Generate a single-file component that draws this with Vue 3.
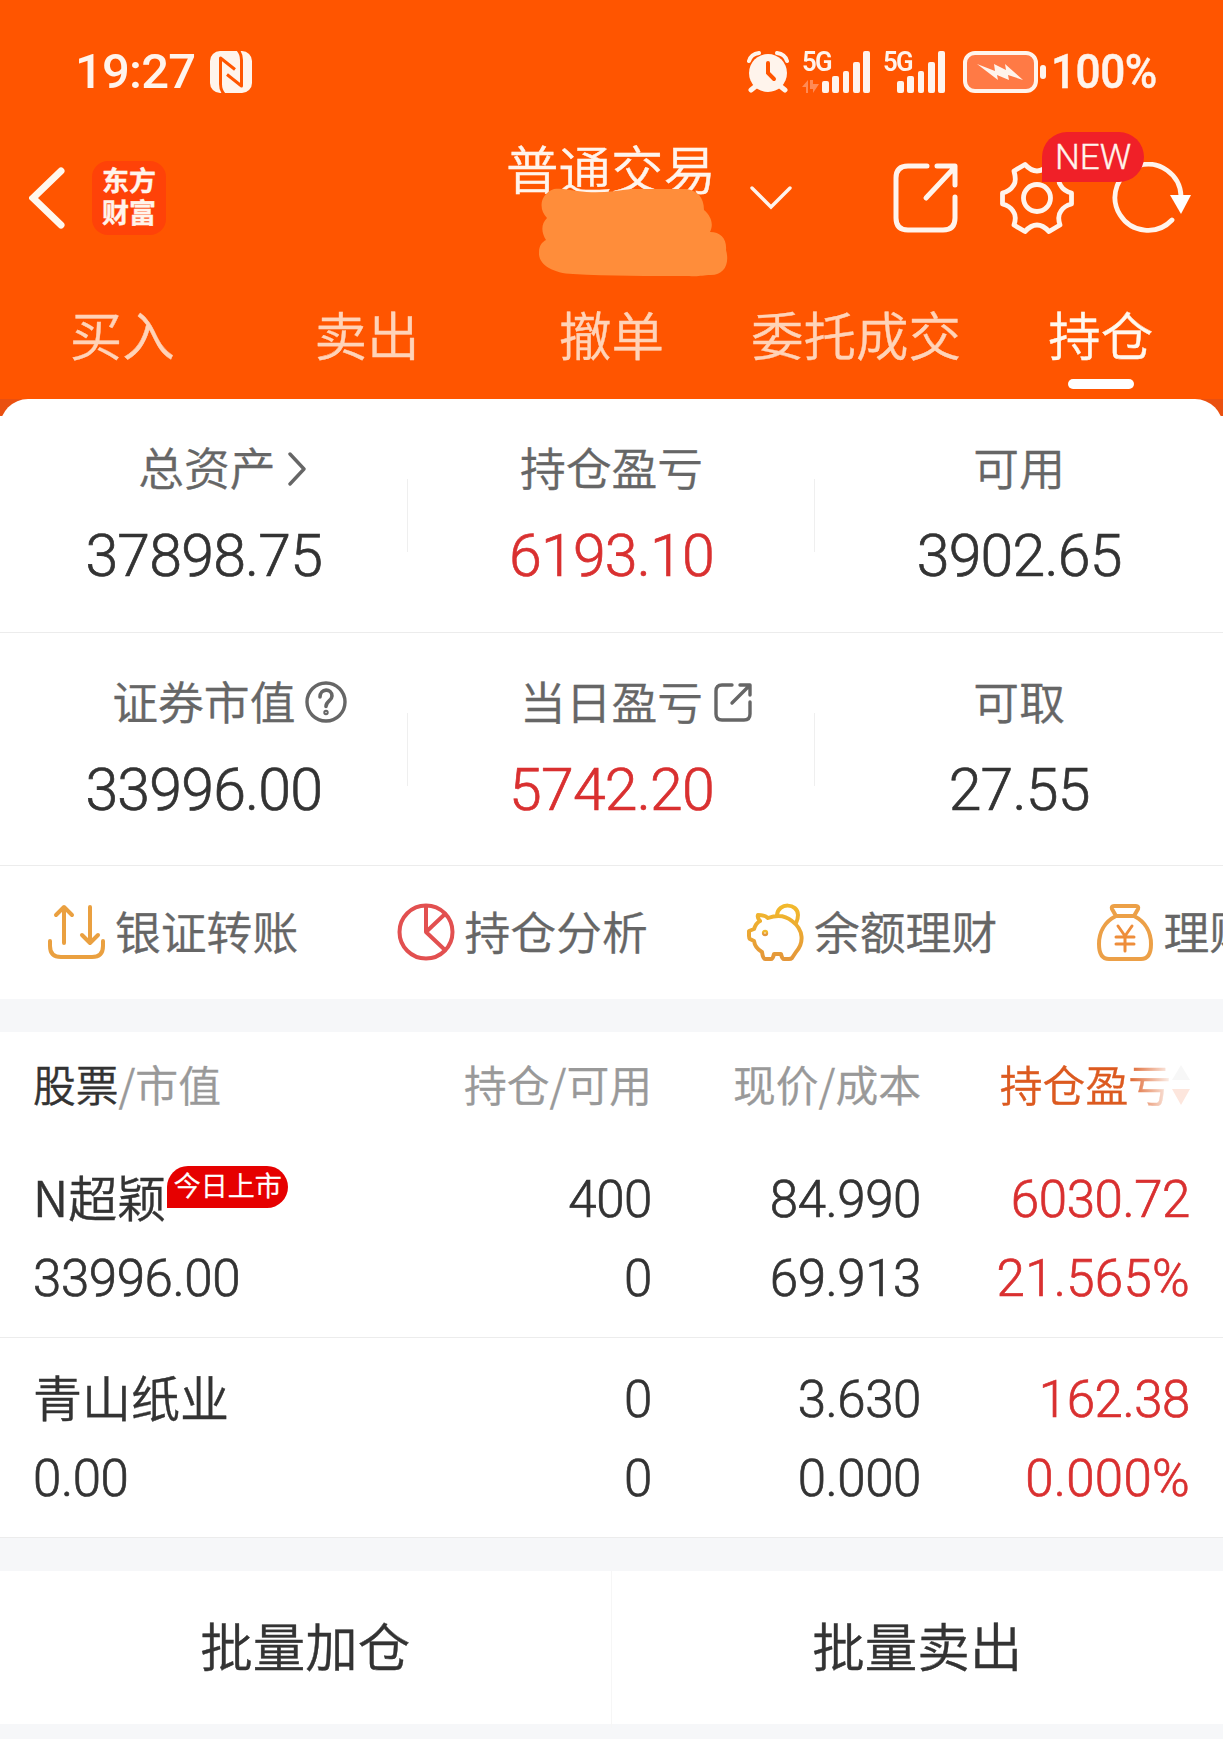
<template>
  <div class="trade-page">
    <header class="header">
      <div class="status-bar">
        <span class="status-time">19:27</span>
        <svg class="nfc" viewBox="0 0 42 42">
          <rect width="42" height="42" rx="10" fill="#fff4ec" />
          <path d="M14 43Q10.500 39 10.500 33V7L25 18.500M28 -1Q31.500 3 31.500 9V35L17 23.500" fill="none" stroke="#ff5500" stroke-width="3" stroke-linejoin="round" />
        </svg>

        <div class="status-right">
          <svg class="alarm" viewBox="0 0 42 42">
            <g fill="none" stroke="#fff4ec" stroke-linecap="round">
              <path d="M2 10Q4 3 12 2M30 2Q38 3 40 10" stroke-width="4" />
              <path d="M9 35L4 39M33 35L38 39" stroke-width="5" />
            </g>
            <circle cx="21" cy="22" r="19" fill="#fff4ec" />
            <path d="M21 12V22L27 28" fill="none" stroke="#ff5500" stroke-width="4" stroke-linecap="round" />
          </svg>

          <div v-for="n in 2" :key="n" class="signal" :class="'signal-' + n">
            <span class="signal-label">5G</span>
            <svg v-if="n === 1" class="signal-data" viewBox="0 0 18 13">
              <path d="M0 7L6 0V13H4V7ZM8 0H11V4H17L11 13V9H8Z" fill="#ff8a55" />
            </svg>
            <div class="signal-bars">
              <i v-for="h in bars" :key="h" :style="{ height: h + 'px' }"></i>
            </div>
          </div>

          <svg class="battery" viewBox="0 0 84 42">
            <rect x="2" y="2" width="71" height="38" rx="10" fill="#ff7a45" stroke="#fff4ec" stroke-width="4" />
            <path d="M14 13L32 20L31 13L43 19L42 13L60 29L45 24L46 29L34 24L35 29Z" fill="#fff4ec" />
            <rect x="77" y="14" width="6" height="14" rx="3" fill="#fff4ec" />
          </svg>
          <span class="status-percent">100%</span>
        </div>
      </div>

      <div class="nav-bar">
        <svg class="back" viewBox="0 0 36 62">
          <path d="M32 4L4 31L32 58" fill="none" stroke="#fff8ee" stroke-width="7" stroke-linecap="round" />
        </svg>
        <div class="logo">
          <span>东方</span>
          <span>财富</span>
        </div>

        <div class="account">
          <span class="account-title">普通交易</span>
          <svg class="account-mask" viewBox="0 0 190 90">
            <path d="M15 1C24 0 29 2 38 3C60 6 75 3 93 1H147C158 2 165 9 165 22C172 28 175 36 171 44C182 44 188 51 187 62C191 76 185 87 172 87C163 87 160 89 150 88C110 88 70 88 34 86C13 85 -1 76 0 64C0 58 3 54 7 52C2 44 2 36 8 30C-1 21 1 6 15 1Z" fill="#ff8d3a" />
          </svg>
        </div>
        <svg class="account-arrow" viewBox="0 0 42 24">
          <path d="M2 2L21 21L40 2" fill="none" stroke="#fff4ec" stroke-width="3.4" stroke-linecap="round" />
        </svg>

        <div class="actions">
          <svg class="action-share" viewBox="0 0 66 70">
            <path d="M34 3H15Q3 3 3 15V55Q3 67 15 67H50Q62 67 62 55V34M33 35L62 4M44 3H62V22" fill="none" stroke="#fff4ec" stroke-width="5" stroke-linecap="round" stroke-linejoin="round" />
          </svg>
          <svg class="action-gear" viewBox="0 0 74 72">
            <path d="M25 2.500L14 9Q17 20 13 24Q10 29 2.500 31V42Q10 44 13 49Q17 54 14 63L25 69.500Q31 63 37 63Q43 63 49 69.500L60 63Q57 54 61 49Q64 44 71.500 42V31Q64 29 61 24Q57 19 60 9L49 2.500Q43 9 37 9Q31 9 25 2.500Z" fill="none" stroke="#fff4ec" stroke-width="4.800" stroke-linejoin="round" />
            <circle cx="37" cy="36" r="13.500" fill="none" stroke="#fff4ec" stroke-width="4.800" />
          </svg>
          <svg class="action-refresh" viewBox="0 0 80 72">
            <path d="M60 58A33 33 0 1 1 69 34" fill="none" stroke="#fff4ec" stroke-width="4.800" stroke-linecap="round" />
            <path d="M58 33H79L69 52Z" fill="#fff" />
          </svg>
          <span class="new-badge">NEW</span>
        </div>
      </div>

      <nav class="tabs">
        <span
          v-for="tab in tabs"
          :key="tab"
          class="tab"
          :class="{ active: tab === activeTab }"
          @click="activeTab = tab"
        >{{ tab }}</span>
      </nav>
    </header>

    <div class="card-wrap">
      <section class="summary">
        <div v-for="(row, i) in summary" :key="i" class="summary-row">
          <div v-for="item in row" :key="item.label" class="summary-cell">
            <div class="summary-label" :class="item.icon">
              <span>{{ item.label }}</span>
              <span class="label-icon">
                <svg v-if="item.icon === 'arrow'" width="18" height="36" viewBox="0 0 18 36">
                  <path d="M2 3L16 18L2 33" />
                </svg>
                <svg v-if="item.icon === 'help'" width="42" height="42" viewBox="0 0 42 42">
                  <circle cx="21" cy="21" r="19" />
                  <path d="M15 16C15 7 27 7 27 15C27 20 21 20 21 25.500" stroke-width="3.600" />
                  <circle cx="21" cy="31.500" r="1" />
                </svg>
                <svg v-if="item.icon === 'share'" width="40" height="40" viewBox="0 0 40 40">
                  <path d="M19 3H9Q3 3 3 9V32Q3 38 9 38H31Q37 38 37 32V20M19 21L36 4M27 3H37V13" />
                </svg>
              </span>
            </div>
            <div class="summary-value" :class="{ red: item.red }">{{ item.value }}</div>
          </div>
        </div>
      </section>
    </div>

    <section class="tools">
      <div class="tool">
        <svg viewBox="0 0 58 58" stroke="#eaa040">
          <path d="M17 40V5M9 12L17 4L25 12M43 4V39M35 32L43 40L51 32M3 38V43Q3 54 14 54H45Q56 54 56 43V38" />
        </svg>
        <span>银证转账</span>
      </div>
      <div class="tool">
        <svg viewBox="0 0 58 58" stroke="#e25050">
          <circle cx="29" cy="29" r="26.500" />
          <path d="M29 3V29L48 11M29 29L48 47" />
        </svg>
        <span>持仓分析</span>
      </div>
      <div class="tool">
        <svg viewBox="0 0 58 58" stroke="url(#gold)">
          <defs>
            <linearGradient id="gold" x1="0" y1="0" x2="0" y2="1">
              <stop offset="0" stop-color="#f2b92c" />
              <stop offset="1" stop-color="#e4973a" />
            </linearGradient>
          </defs>
          <path d="M12 12Q19 12 22 15C30 12 39 12 46 18C58 27 58 40 50 49L46 55Q45 56 43 56H38Q36 56 35 51H28Q27 56 25 56H19Q17 56 16 49Q9 45 8 38L4 36Q3 35 3 33V28L8 26Q10 20 14 18Q11 15 12 12ZM31 12C32 -1 52 0 52 12Q52 16 50 20" />
          <circle cx="19" cy="30" r="1.200" />
        </svg>
        <span>余额理财</span>
      </div>
      <div class="tool">
        <svg viewBox="0 0 58 58" stroke="#eca047">
          <path d="M18 3H40Q43 3 42 6L38 13H20L16 6Q15 3 18 3ZM20 13C8 19 3 30 3 41C3 51 6 56 13 56H45C52 56 55 51 55 41C55 30 50 19 38 13" />
          <path d="M22 23L29 33L36 23M29 33V48M20 34H38M20 41H38" stroke="#ee8d3a" stroke-width="3" />
        </svg>
        <span>理财</span>
      </div>
    </section>

    <section class="positions">
      <div class="grid table-head">
        <span><b>股票</b>/市值</span>
        <span>持仓/可用</span>
        <span>现价/成本</span>
        <span class="sort-col">
          <span class="sort-text">持仓盈亏</span>
          <svg class="sort-icon" viewBox="0 0 18 40">
            <path d="M0 15L9 0L18 15Z" fill="#f7f7f7" />
            <path d="M0 24H18L9 40Z" fill="#fde6dd" />
          </svg>
        </span>
      </div>

      <div v-for="stock in stocks" :key="stock.name" class="grid stock-row">
        <div class="stock-name">
          <span>{{ stock.name }}</span>
          <span v-if="stock.tag" class="stock-tag">{{ stock.tag }}</span>
        </div>
        <span>{{ stock.holding }}</span>
        <span>{{ stock.price }}</span>
        <span class="red">{{ stock.profit }}</span>
        <span>{{ stock.market }}</span>
        <span>{{ stock.available }}</span>
        <span>{{ stock.cost }}</span>
        <span class="red rate">{{ stock.rate }}</span>
      </div>
    </section>

    <footer class="batch-bar">
      <div class="batch-btn">批量加仓</div>
      <div class="batch-btn">批量卖出</div>
    </footer>
  </div>
</template>

<script setup>
import { ref } from 'vue'

const bars = [12, 17, 22, 31, 42]

const tabs = ['买入', '卖出', '撤单', '委托成交', '持仓']
const activeTab = ref('持仓')

const summary = [
  [
    { label: '总资产', value: '37898.75', icon: 'arrow' },
    { label: '持仓盈亏', value: '6193.10', red: true },
    { label: '可用', value: '3902.65' }
  ],
  [
    { label: '证券市值', value: '33996.00', icon: 'help' },
    { label: '当日盈亏', value: '5742.20', icon: 'share', red: true },
    { label: '可取', value: '27.55' }
  ]
]

const stocks = [
  {
    name: 'N超颖',
    tag: '今日上市',
    market: '33996.00',
    holding: '400',
    available: '0',
    price: '84.990',
    cost: '69.913',
    profit: '6030.72',
    rate: '21.565%'
  },
  {
    name: '青山纸业',
    market: '0.00',
    holding: '0',
    available: '0',
    price: '3.630',
    cost: '0.000',
    profit: '162.38',
    rate: '0.000%'
  }
]
</script>

<style>
body {
  margin: 0;
  background: #f6f7f9;
}
</style>

<style scoped>
.trade-page {
  width: 1223px;
  height: 1739px;
  overflow: hidden;
  background: #f6f7f9;
  color: #333;
  font-family: Roboto, "Noto Sans CJK SC", sans-serif;
  font-weight: 350;
  -webkit-text-stroke: 0.4px;
}

svg {
  display: block;
  flex: none;
}

.red {
  color: #d93030;
}

/* header */
.header {
  height: 399px;
  background: #ff5500;
  color: #fff4ec;
}

.status-bar {
  display: flex;
  align-items: center;
  box-sizing: border-box;
  height: 144px;
  padding: 0 66px 0 75px;
  -webkit-text-stroke: 0;
}

.status-time,
.status-percent {
  font-size: 49px;
  font-weight: 500;
  line-height: 50px;
}

.status-time {
  width: 135px;
  letter-spacing: -0.8px;
}

.nfc {
  width: 42px;
  height: 42px;
}

.status-right {
  display: flex;
  align-items: center;
  margin-left: auto;
}

.alarm {
  width: 42px;
  height: 42px;
  margin-right: 13px;
}

.signal {
  position: relative;
  height: 42px;
}

.signal-1 {
  width: 81px;
}

.signal-2 {
  width: 80px;
}

.signal-label {
  position: absolute;
  top: -1px;
  left: 0;
  font-size: 28px;
  font-weight: 600;
  line-height: 24px;
  letter-spacing: -2px;
  transform: scaleX(0.92);
  transform-origin: left;
}

.signal-data {
  position: absolute;
  left: 0;
  bottom: 0;
  width: 18px;
  height: 13px;
}

.signal-bars {
  display: flex;
  align-items: flex-end;
  gap: 3.5px;
  height: 42px;
  padding-left: 20px;
}

.signal-2 .signal-bars {
  padding-left: 14px;
}

.signal-bars i {
  width: 6.8px;
  border-radius: 2px;
  background: #fff4ec;
}

.battery {
  width: 84px;
  height: 42px;
  margin-right: 4px;
}

.status-percent {
  width: 106px;
  letter-spacing: -0.5px;
  transform: scaleX(0.9);
  transform-origin: left;
  -webkit-text-stroke: 0.5px;
}

.nav-bar {
  display: flex;
  align-items: center;
  height: 108px;
}

.back {
  width: 36px;
  height: 62px;
  margin-left: 29px;
}

.logo {
  display: flex;
  flex-direction: column;
  align-items: center;
  justify-content: center;
  width: 74px;
  height: 74px;
  margin-left: 27px;
  border-radius: 16px;
  background: #ff4208;
  font-size: 27px;
  font-weight: 700;
  line-height: 32px;
}

.account {
  position: relative;
  box-sizing: border-box;
  width: 208px;
  height: 108px;
  margin-left: 340px;
  padding-top: 2px;
}

.account-title {
  font-size: 52.5px;
  line-height: 52px;
  white-space: nowrap;
}

.account-mask {
  position: absolute;
  top: 44px;
  left: 33px;
  width: 190px;
  height: 90px;
}

.account-arrow {
  width: 42px;
  height: 24px;
  margin-left: 36px;
}

.actions {
  position: relative;
  display: flex;
  align-items: center;
  margin-left: 101px;
}

.action-share {
  width: 66px;
  height: 70px;
}

.action-gear {
  width: 74px;
  height: 72px;
  margin-left: 41px;
}

.action-refresh {
  width: 80px;
  height: 72px;
  margin-left: 38px;
}

.new-badge {
  position: absolute;
  top: -30px;
  left: 149px;
  width: 102px;
  height: 50px;
  border-radius: 25px 25px 25px 0;
  background: #f02028;
  font-size: 35px;
  line-height: 51px;
  text-align: center;
}

.tabs {
  display: grid;
  grid-template-columns: repeat(5, 1fr);
  height: 147px;
}

.tab {
  display: flex;
  flex-direction: column;
  align-items: center;
  padding-top: 56px;
  color: #ffd3b8;
  font-size: 52.5px;
  line-height: 60px;
}

.tab.active {
  color: #fff8ee;
}

.tab.active::after {
  content: "";
  width: 66px;
  height: 10px;
  margin-top: 11px;
  border-radius: 5px;
  background: #fff;
}

/* asset summary */
.card-wrap {
  background: linear-gradient(#ea5010 17px, #fff 17px);
}

.summary {
  border-radius: 28px 28px 0 0;
  background: #fff;
}

.summary-row {
  display: grid;
  grid-template-columns: repeat(3, 1fr);
  box-sizing: border-box;
  height: 233.5px;
  padding-top: 40px;
  border-bottom: 1px solid #ececec;
}

.summary-cell {
  display: flex;
  flex-direction: column;
  align-items: center;
  position: relative;
}

.summary-cell:not(:last-child)::after {
  content: "";
  position: absolute;
  top: 40px;
  right: 0;
  width: 1px;
  height: 73px;
  background: #efefef;
}

.summary-label {
  display: flex;
  align-items: center;
  height: 60px;
  color: #666;
  font-size: 45.8px;
}

.summary-label > span:first-child {
  margin-top: -6px;
}

.summary-label.arrow {
  padding-left: 6px;
}

/* takes no width, so the label itself stays centred */
.label-icon {
  width: 0;
  margin-top: -1px;
}

.label-icon svg {
  margin-left: 10px;
  fill: none;
  stroke: #666;
  stroke-width: 3.4;
  stroke-linecap: round;
  stroke-linejoin: round;
}

.arrow .label-icon svg {
  margin-left: 12px;
}

.summary-value {
  margin-top: 22px;
  font-size: 59px;
  font-weight: 300;
  line-height: 70px;
  letter-spacing: -0.8px;
  -webkit-text-stroke: 0.7px;
}

/* tools */
.tools {
  display: flex;
  height: 133px;
  padding-left: 47px;
  overflow: hidden;
  background: #fff;
}

.tool {
  display: flex;
  flex: none;
  align-items: center;
  gap: 10px;
  width: 349.5px;
  color: #666;
  font-size: 45.8px;
  white-space: nowrap;
}

.tool span {
  margin-top: -6px;
}

.tool svg {
  width: 58px;
  height: 58px;
  margin-top: -2px;
  fill: none;
  stroke-width: 4;
  stroke-linecap: round;
  stroke-linejoin: round;
}

/* positions */
.positions {
  margin-top: 33px;
  background: #fff;
}

.grid {
  display: grid;
  grid-template-columns: 320px 1fr 269px 269px;
  padding: 0 33px;
}

.grid > :not(:nth-child(4n + 1)) {
  text-align: right;
}

.table-head {
  align-items: center;
  box-sizing: border-box;
  height: 106px;
  padding-bottom: 4px;
  color: #999;
  font-family: "Noto Sans CJK SC", sans-serif;
  font-size: 42.8px;
}

.table-head b {
  color: #333;
  font-weight: inherit;
}

.sort-col {
  display: flex;
  align-items: center;
  justify-content: flex-end;
  gap: 1px;
  color: #dc5a20;
}

.sort-text {
  -webkit-mask-image: linear-gradient(to right, #000 74%, transparent 102%);
  mask-image: linear-gradient(to right, #000 74%, transparent 102%);
}

.sort-icon {
  width: 18px;
  height: 40px;
  margin-top: 4px;
}

.stock-row {
  grid-template-rows: 79px 79px;
  box-sizing: border-box;
  height: 200px;
  padding-top: 22px;
  border-bottom: 1px solid #ececec;
  font-size: 51px;
  font-weight: 300;
  line-height: 79px;
  letter-spacing: -0.4px;
  -webkit-text-stroke: 0.7px;
}

.rate {
  letter-spacing: 0.3px;
}

.stock-name {
  display: flex;
  font-size: 49px;
  font-weight: 350;
  letter-spacing: 0;
  white-space: nowrap;
  -webkit-text-stroke: 0.4px;
}

.stock-name > span:first-child {
  margin-top: -4px;
  font-family: "Noto Sans CJK SC", sans-serif;
}

.stock-tag {
  width: 121px;
  height: 42px;
  margin: 6px 0 0 1px;
  border-radius: 21px 21px 21px 0;
  background: #e60000;
  color: #fff;
  font-size: 27px;
  line-height: 43px;
  text-align: center;
}

/* batch actions */
.batch-bar {
  display: grid;
  grid-template-columns: 1fr 1fr;
  height: 153px;
  margin-top: 33px;
  background: #fff;
}

.batch-btn {
  font-size: 52.5px;
  line-height: 157px;
  text-align: center;
}

.batch-btn:first-child {
  border-right: 1px solid #f6f6f6;
}
</style>
